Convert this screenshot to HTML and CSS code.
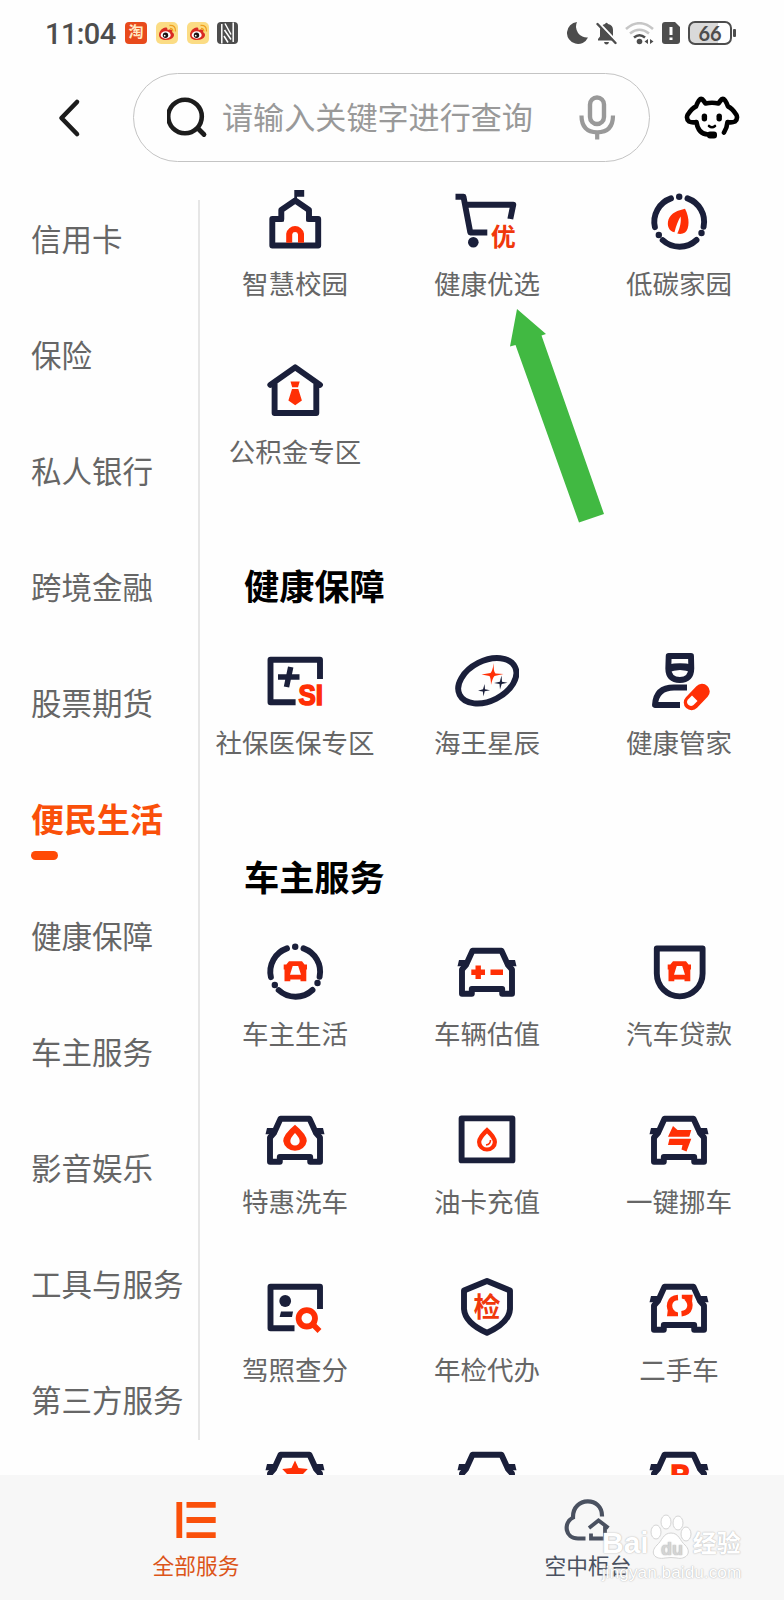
FILE: index.html
```html
<!DOCTYPE html>
<html lang="zh-CN">
<head>
    <meta charset="UTF-8">
    <meta name="viewport" content="width=device-width, initial-scale=1.0">
    <title>全部服务</title>
    <link rel="stylesheet" href="styles.css">
</head>
<body>

    <!-- Shared icon shapes -->
    <svg class="sprite" width="0" height="0">
        <symbol id="car" viewBox="0 0 64 64">
            <path class="line" d="M17.5 10.8H46.5L53 25L57 29.5V53.8H47.2V49H16.8V53.8H7V29.5L11 25Z"/>
            <path class="dark" d="M4 20H12L10 26.3H2.5ZM60 20H52L54 26.3H61.5Z"/>
        </symbol>
        <symbol id="ring" viewBox="0 0 64 64">
            <path class="line round" d="M40.5 8.4A24.8 24.8 0 0 1 56.6 36.8M49.5 50A24.8 24.8 0 0 1 15.7 50.2M7.9 37.2A24.8 24.8 0 0 1 24 8.4"/>
            <circle class="dark" cx="32.2" cy="6.8" r="3.2"/>
            <circle class="dark" cx="11.8" cy="45" r="3.2"/>
            <circle class="dark" cx="54.5" cy="43" r="3.2"/>
        </symbol>
        <symbol id="minicar" viewBox="0 0 64 64">
            <path class="red" fill-rule="evenodd" d="M26 21.3H39L41.5 24.5H44V29.5H43.3V41.3H37.5V39.5H27.3V41.3H21.5V29.5H20.7V24.5H23.3ZM29.7 26L27 34.8H38L35.2 26Z"/>
        </symbol>
        <symbol id="weibo" viewBox="0 0 22 22">
            <rect width="22" height="22" rx="5" fill="#fbdc84"/>
            <path d="M3 13C3 9 7 5 10 5.500C12 5.500 11 8 12 8C15 7 17 8 16 10C20 12 18 18 10 18C6 18 3 16 3 13Z" fill="#d92b22"/>
            <ellipse cx="9.700" cy="13" rx="5" ry="3.700" fill="#fff"/>
            <circle cx="9.500" cy="13.300" r="2.700" fill="#181010"/>
            <circle cx="8.700" cy="13.700" r="0.900" fill="#fff"/>
            <path d="M14 6.500Q17 6.500 16.800 9.500M13.500 3.500Q20 3 19.500 9.500" fill="none" stroke="#f0a020" stroke-width="1.300"/>
        </symbol>
    </svg>

    <!-- Status bar -->
    <div class="status">
        <div class="status-left">
            <span class="time">11:04</span>
            <span class="taobao">淘</span>
            <svg class="app" width="22" height="22"><use href="#weibo"/></svg>
            <svg class="app" width="22" height="22"><use href="#weibo"/></svg>
            <svg class="nfc" width="21" height="22" viewBox="0 0 21 22">
                <rect width="21" height="22" rx="4" fill="#4d4d4d"/>
                <path d="M4.800 2V21.500M16.200 0.500V20M8 1.500L14 12.500M7.500 8L14 17.500M7 14L11 20.500" stroke="#fff" stroke-width="1.500" fill="none"/>
            </svg>
        </div>
        <div class="status-right">
            <svg width="22" height="22" viewBox="0 0 22 22"><path d="M10 0A11 11 0 1 0 21 15.500A11 11 0 0 1 10 0Z" fill="#4d4d4d"/></svg>
            <svg class="bell" width="21" height="23" viewBox="0 0 21 23">
                <path d="M2 18.500V17L4 14.500V8Q4.500 3 9 2Q10.500 -0.500 12 2Q17 3 17 8V14.500L19 17V18.500ZM8 20H13Q12.500 22.500 10.500 22.500Q8.500 22.500 8 20Z" fill="#4d4d4d"/>
                <path d="M3 1L21 20" stroke="#fff" stroke-width="2.500"/>
                <path d="M1.500 2L19.500 21" stroke="#4d4d4d" stroke-width="2.400" stroke-linecap="round"/>
            </svg>
            <svg class="wifi" width="29" height="23" viewBox="0 0 29 23">
                <path d="M1 7Q14.500 -4.500 28 7M5 11.500Q14.500 4 24 11.500" fill="none" stroke="#c6c6c6" stroke-width="2.600"/>
                <path d="M9 15.500Q14.500 11 20 15.500" fill="none" stroke="#4d4d4d" stroke-width="2.600"/>
                <circle cx="14.500" cy="19.500" r="2.800" fill="#4d4d4d"/>
                <path d="M23 17V22L19.500 19.500ZM25 17V22L28.500 19.500Z" fill="#4d4d4d"/>
            </svg>
            <svg class="sim" width="18" height="22" viewBox="0 0 18 22">
                <path d="M3 0H13L18 5V19Q18 22 15 22H3Q0 22 0 19V3Q0 0 3 0Z" fill="#4d4d4d"/>
                <path d="M9 5V13M9 15.500V18" stroke="#fff" stroke-width="3"/>
            </svg>
            <span class="battery">66</span>
            <i class="battery-cap"></i>
        </div>
    </div>

    <!-- Search header -->
    <header class="header">
        <svg class="back" width="24" height="40" viewBox="0 0 24 40"><path d="M20 4L4.500 20L20 36" fill="none" stroke="#1c1c1c" stroke-width="4.600" stroke-linecap="round" stroke-linejoin="round"/></svg>
        <div class="search">
            <svg width="42" height="42" viewBox="0 0 42 42">
                <circle cx="18" cy="19.500" r="16.800" fill="none" stroke="#1c1c1c" stroke-width="4.600"/>
                <path d="M31 31.500L37 37.500" stroke="#1c1c1c" stroke-width="4.800" stroke-linecap="round"/>
            </svg>
            <span class="placeholder">请输入关键字进行查询</span>
            <svg class="mic" width="38" height="46" viewBox="0 0 38 46">
                <rect x="12" y="2.500" width="14" height="26.500" rx="7" fill="none" stroke="#999" stroke-width="4.400"/>
                <path d="M3.500 20.500Q3.500 37.300 19.200 37.300Q35 37.300 35 20.500M19.200 37.500V44.500" fill="none" stroke="#999" stroke-width="4.200"/>
            </svg>
        </div>
        <svg class="dog" width="56" height="44" viewBox="0 0 56 44">
            <path d="M12 11.500C14 6 16 3 18 4Q20 6 21.500 8.500Q28 7 34.500 8.500Q36 6 38 4C40 3 42 6 44 11.500Q48 13 52.500 20Q54 24 51 26.500Q48 28 43.500 27Q43 33 40 37.500M12 11.500Q8 13 3.500 20Q2 24 5 26.500Q8 28 12.500 27Q14 39 24 39.500" fill="none" stroke="#000" stroke-width="4.600" stroke-linecap="round" stroke-linejoin="round"/>
            <rect x="17.700" y="18.500" width="5.400" height="8" rx="2.700"/>
            <rect x="32.500" y="18.500" width="5.400" height="8" rx="2.700"/>
            <path d="M25 31Q28 33.500 31 31" fill="none" stroke="#000" stroke-width="2.600" stroke-linecap="round"/>
            <rect x="23" y="36.500" width="10" height="7" rx="3"/>
        </svg>
    </header>

    <main class="main">
        <!-- Categories -->
        <nav class="sidebar">
            <a class="cat">信用卡</a>
            <a class="cat">保险</a>
            <a class="cat">私人银行</a>
            <a class="cat">跨境金融</a>
            <a class="cat">股票期货</a>
            <a class="cat active">便民生活</a>
            <a class="cat">健康保障</a>
            <a class="cat">车主服务</a>
            <a class="cat">影音娱乐</a>
            <a class="cat">工具与服务</a>
            <a class="cat">第三方服务</a>
        </nav>
        <div class="divider"></div>

        <div class="content">
            <div class="grid">
                <div class="item">
                    <svg class="icon" viewBox="0 0 64 64">
                        <path class="line" d="M9.300 55.500V29H18.300V20L32.200 10.500L46 20V29H55.200V55.500Z"/>
                        <path class="dark" d="M15.500 26H21V31.500H15.500ZM43.300 26H48.800V31.500H43.300ZM31.300 0H41.200V6.700H34V10H31.300Z"/>
                        <path class="redline" d="M26.200 52.700V44A6 6 0 0 1 38 44V52.700"/>
                    </svg>
                    <span>智慧校园</span>
                </div>
                <div class="item">
                    <svg class="icon" viewBox="0 0 64 64">
                        <path class="line flat" d="M0.500 6.700H8.500L15.300 42.500H32.300M10 14.700H58.300L55.300 29"/>
                        <circle class="dark" cx="18.300" cy="52.300" r="5.300"/>
                        <text class="glyph" x="35.700" y="56" font-size="25">优</text>
                    </svg>
                    <span>健康优选</span>
                </div>
                <div class="item">
                    <svg class="icon" viewBox="0 0 64 64">
                        <use href="#ring"/>
                        <path class="red" d="M38 18.700C43 28 42.500 39 38 42.500Q35 44.500 30.300 43.600C33 38 34.500 31 33.500 26.500C31 31 29 36 27.500 42.300C22 41 19.500 36 21.500 29.500C24 22.500 31 20.500 38 18.700Z"/>
                    </svg>
                    <span>低碳家园</span>
                </div>
                <div class="item">
                    <svg class="icon" viewBox="0 0 64 64">
                        <path class="line round" d="M7.300 26.800L32.200 9.300L57 26.800M11.600 26V55H53.300V26"/>
                        <path class="red" d="M27.500 23.500H36.700L35 29.300H29.200ZM29 31H35.300L38.900 42.500L32.200 47.300L25.400 42.500Z"/>
                    </svg>
                    <span>公积金专区</span>
                </div>
            </div>

            <h2>健康保障</h2>
            <div class="grid">
                <div class="item">
                    <svg class="icon" viewBox="0 0 64 64">
                        <path class="line flat" d="M57 30V10.800H7.500V53.300H32.600"/>
                        <path d="M15 28H36.500M27.700 18L23.500 38" fill="none" stroke="#1a1f3a" stroke-width="5.500"/>
                        <text class="latin heavy" x="35.500" y="55.500" font-size="29" textLength="24.500" lengthAdjust="spacingAndGlyphs">SI</text>
                    </svg>
                    <span>社保医保专区</span>
                </div>
                <div class="item">
                    <svg class="icon" viewBox="0 0 64 64">
                        <ellipse class="line" cx="32.300" cy="31.800" rx="31" ry="20" transform="rotate(-27 32.300 31.800)"/>
                        <path class="red" d="M38.800 14Q38.300 23 40.500 24.500L48.500 25L39.500 27Q37.500 29 36 36Q35.800 28.500 34.500 27L26.500 25.500L35.500 24Q37.500 22 38.800 14Z"/>
                        <path class="dark" d="M46.500 26.500L47 32.700L52.500 33.700L46.700 35L45 40.500L44.500 35L39 34L44.800 32.700ZM29.600 35L30 40.300L35 41.300L29.700 42.300L28.500 47.500L27.800 42.500L23 41.700L28 40.300Z"/>
                    </svg>
                    <span>海王星辰</span>
                </div>
                <div class="item">
                    <svg class="icon" viewBox="0 0 64 64">
                        <path class="line" d="M21.700 7H44L44.300 19.500Q44 31 32.800 31Q21.500 31 21.300 19.500Z"/>
                        <path class="dark" d="M21 15.500Q33 12.800 45 15.500V23.500Q33 18.500 21 23.500Z"/>
                        <path class="line flat" d="M40 38.500H28Q9 38 8 56H33"/>
                        <path d="M44.500 53.500L55 42.500" stroke="#ff2f05" stroke-width="15.500" stroke-linecap="round"/>
                        <path d="M41 50.500L45 46.500L50.500 52L46.500 56Q43.500 58 41 55.500Q39 53 41 50.500Z" fill="#fff"/>
                    </svg>
                    <span>健康管家</span>
                </div>
            </div>

            <h2>车主服务</h2>
            <div class="grid">
                <div class="item">
                    <svg class="icon" viewBox="0 0 64 64"><use href="#ring"/><use href="#minicar"/></svg>
                    <span>车主生活</span>
                </div>
                <div class="item">
                    <svg class="icon" viewBox="0 0 64 64">
                        <use href="#car"/>
                        <path d="M16.300 32.300H30M23.200 25.500V39M35.500 32.300H48" stroke="#ff2f05" stroke-width="5.400"/>
                    </svg>
                    <span>车辆估值</span>
                </div>
                <div class="item">
                    <svg class="icon" viewBox="0 0 64 64">
                        <path class="line" d="M9.800 8.500H55.600V33.500A22.900 22.900 0 0 1 9.800 33.500Z"/>
                        <use href="#minicar"/>
                    </svg>
                    <span>汽车贷款</span>
                </div>
                <div class="item">
                    <svg class="icon" viewBox="0 0 64 64">
                        <use href="#car"/>
                        <path class="red" fill-rule="evenodd" d="M32 16.700Q43.800 26.500 43.800 33A11.900 11.300 0 0 1 20.200 33Q20.200 26.500 32 16.700ZM32 25Q27.300 30 27.300 33A4.700 4.500 0 0 0 36.700 33Q36.700 30 32 25Z"/>
                    </svg>
                    <span>特惠洗车</span>
                </div>
                <div class="item">
                    <svg class="icon" viewBox="0 0 64 64">
                        <rect class="line" x="6.600" y="10.400" width="50.800" height="42"/>
                        <path class="red" fill-rule="evenodd" d="M32 19.300Q42 28 42 34A10 9.500 0 0 1 22 34Q22 28 32 19.300ZM32 25.500Q26.300 31 26.300 34.300A5.700 5.300 0 0 0 37.700 34.300Q37.700 31 32 25.500Z"/>
                        <path d="M35.500 32Q35.500 36.500 31 37" fill="none" stroke="#ff2f05" stroke-width="1.600"/>
                    </svg>
                    <span>油卡充值</span>
                </div>
                <div class="item">
                    <svg class="icon" viewBox="0 0 64 64">
                        <use href="#car"/>
                        <path class="red" d="M26 18L30.500 22H44.300L42.300 28.700H21ZM22.500 30.700H44.300L39.500 43.500L34.500 41.500L35.500 37H21Z"/>
                    </svg>
                    <span>一键挪车</span>
                </div>
                <div class="item">
                    <svg class="icon" viewBox="0 0 64 64">
                        <path class="line flat" d="M57 33V10.800H7.500V52.300H31.500"/>
                        <circle class="dark" cx="22.200" cy="25" r="5.900"/>
                        <path class="dark" d="M18 35.500H30L29 41H16.600Z"/>
                        <circle cx="43.800" cy="42.300" r="8.200" fill="none" stroke="#ff2f05" stroke-width="5.800"/>
                        <path d="M49.500 48L56.500 55" stroke="#ff2f05" stroke-width="5.500"/>
                    </svg>
                    <span>驾照查分</span>
                </div>
                <div class="item">
                    <svg class="icon" viewBox="0 0 64 64">
                        <path class="line" d="M32 5L55 14.500V33Q54 47 32 56.800Q10 47 9 33V14.500Z"/>
                        <text class="glyph" x="18.500" y="41" font-size="27">检</text>
                    </svg>
                    <span>年检代办</span>
                </div>
                <div class="item">
                    <svg class="icon" viewBox="0 0 64 64">
                        <use href="#car"/>
                        <path d="M31 21.500C22 22 20 31 26 37M34.500 37.700C43.500 37 45.500 28 39.500 22" fill="none" stroke="#ff2f05" stroke-width="5.400"/>
                        <path class="red" d="M20 40.300L21 32.500L31 36.500V40.300ZM45.700 18.700L45 26L34.800 22.500V18.700Z"/>
                    </svg>
                    <span>二手车</span>
                </div>
                <div class="item">
                    <svg class="icon" viewBox="0 0 64 64">
                        <use href="#car"/>
                        <path class="red" d="M32 16.500L35.500 24L44.800 25L40 30H24L19.200 25L28.500 24Z"/>
                    </svg>
                </div>
                <div class="item">
                    <svg class="icon" viewBox="0 0 64 64"><use href="#car"/></svg>
                </div>
                <div class="item">
                    <svg class="icon" viewBox="0 0 64 64">
                        <use href="#car"/>
                        <text class="latin heavy" x="23.500" y="40" font-size="28">P</text>
                    </svg>
                </div>
            </div>
        </div>
    </main>

    <!-- Bottom tabs -->
    <footer class="tabs">
        <a class="tab current">
            <svg width="48" height="46" viewBox="0 0 48 46">
                <path d="M7.300 5V41M14.500 7.800H43.700M14.500 23H43.700M14.500 38.200H43.700" stroke="#fa500a" stroke-width="5.800"/>
            </svg>
            <span>全部服务</span>
        </a>
        <a class="tab">
            <svg width="48" height="46" viewBox="0 0 48 46">
                <path d="M38 19.500C38.500 -1 8.500 -0.500 9 20.500C-1 26 1 41.500 14 41.500H21.500" fill="none" stroke="#4a5160" stroke-width="4.200"/>
                <path d="M25 31L34.500 23.500L44.500 31M27 36.500V41.500H41V28.500" fill="none" stroke="#4a5160" stroke-width="3.800"/>
            </svg>
            <span>空中柜台</span>
        </a>
    </footer>

    <!-- Pointer arrow -->
    <svg class="arrow" width="96" height="218" viewBox="0 0 96 218">
        <path d="M9 2L38 27L33.500 28.500L96 207L71 215.500L7.500 38L2 39.500Z" fill="#41b942"/>
    </svg>

    <!-- Watermark -->
    <div class="watermark">
        <div class="wm-logo">
            <span class="wm-bai">Bai</span>
            <svg width="44" height="46" viewBox="0 0 44 46">
                <g fill="#fff" stroke="#d4d4d4" stroke-width="1">
                    <ellipse cx="7" cy="18" rx="5" ry="7"/>
                    <ellipse cx="17" cy="8" rx="5" ry="7"/>
                    <ellipse cx="29" cy="9" rx="5" ry="7"/>
                    <ellipse cx="37" cy="20" rx="5" ry="7"/>
                    <path d="M22 19C30 19 31 27 36 31C44 39 36 46 28 44Q22 43 16 44C6 46 0 39 8 31C13 27 14 19 22 19Z"/>
                </g>
                <text class="wm-du" x="12" y="41" font-size="18">du</text>
            </svg>
            <span class="wm-exp">经验</span>
        </div>
        <div class="wm-url">jingyan.baidu.com</div>
    </div>

</body>
</html>
```
FILE: styles.css
```css
* {
    box-sizing: border-box;
}
body {
    margin: 0;
    width: 784px;
    height: 1600px;
    overflow: hidden;
    position: relative;
    display: flex;
    flex-direction: column;
    background-color: #fefefe;
    font-family: "Noto Sans CJK SC", sans-serif;
    color: #666;
}
svg {
    display: block;
    flex-shrink: 0;
}
.sprite {
    display: none;
}

/* Status bar */
.status {
    height: 66px;
    flex-shrink: 0;
    display: flex;
    justify-content: space-between;
    padding: 0 48px 0 45px;
}
.status-left, .status-right {
    display: flex;
    align-items: center;
}
.time {
    width: 80px;
    padding-top: 2px;
    font-family: Roboto, sans-serif;
    font-size: 29px;
    font-weight: 500;
    letter-spacing: -0.6px;
    color: #4d4d4d;
}
.taobao {
    width: 22px;
    height: 22px;
    border-radius: 4px;
    background-color: #e84a1c;
    color: #ffe9c4;
    font-size: 15px;
    font-weight: bold;
    line-height: 18px;
    text-align: center;
}
.app {
    margin-left: 9px;
}
.nfc {
    margin-left: 8px;
}
.bell {
    margin-left: 7px;
}
.wifi {
    margin-left: 8px;
}
.sim {
    margin-left: 8px;
}
.battery {
    width: 44px;
    height: 24px;
    margin-left: 8px;
    border: 2px solid #4d4d4d;
    border-radius: 7px;
    background: linear-gradient(to right, #d9d9d9 70%, #fff 70%);
    font-family: Lato, sans-serif;
    font-size: 20px;
    font-weight: bold;
    line-height: 20px;
    text-align: center;
    color: #4d4d4d;
}
.battery-cap {
    width: 3px;
    height: 8px;
    margin-left: 1px;
    border-radius: 1px;
    background-color: #4d4d4d;
}

/* Header */
.header {
    height: 104px;
    flex-shrink: 0;
    display: flex;
    align-items: center;
    padding: 0 43px 1px 57px;
}
.back {
    margin-right: 52px;
}
.search {
    width: 517px;
    height: 89px;
    display: flex;
    align-items: center;
    padding: 0 33px;
    border: 1px solid #c4c4c4;
    border-radius: 45px;
}
.placeholder {
    margin-left: 13px;
    padding-bottom: 4px;
    font-size: 31.1px;
    line-height: 44px;
    color: #999;
    white-space: nowrap;
}
.mic {
    margin-left: auto;
}
.dog {
    margin-left: 34px;
    margin-bottom: 2px;
}

/* Body */
.main {
    height: 1305px;
    flex-shrink: 0;
    display: flex;
    overflow: hidden;
}
.sidebar {
    width: 198px;
    padding: 10px 0 0 31px;
}
.cat {
    display: block;
    height: 116.1px;
    font-size: 30.5px;
    line-height: 116px;
    white-space: nowrap;
}
.cat.active {
    font-size: 33px;
    font-weight: bold;
    color: #fa500a;
}
.cat.active::after {
    content: "";
    display: block;
    width: 27px;
    height: 9px;
    margin-top: -25px;
    border-radius: 5px;
    background-color: #ff4a05;
}
.divider {
    width: 2px;
    height: 1240px;
    margin-top: 30px;
    background-color: #e6e6e6;
}
.content {
    width: 576px;
    margin-left: -1px;
    padding-top: 20px;
}
.grid {
    display: grid;
    grid-template-columns: repeat(3, 192px);
    grid-auto-rows: 168px;
}
.item {
    display: flex;
    flex-direction: column;
    align-items: center;
    font-size: 26.5px;
    line-height: 36px;
    white-space: nowrap;
}
.icon {
    width: 64px;
    height: 64px;
    margin-bottom: 11px;
}
h2 {
    margin: 35px 0 40px 45px;
    font-size: 35.2px;
    line-height: 48px;
    color: #000;
}

/* Icon strokes */
.line {
    fill: none;
    stroke: #1a1f3a;
    stroke-width: 5.9;
    stroke-linejoin: round;
}
.round {
    stroke-linecap: round;
}
.dark {
    fill: #1a1f3a;
}
.red {
    fill: #ff2f05;
}
.redline {
    fill: none;
    stroke: #ff2f05;
    stroke-width: 6;
}
.glyph {
    fill: #f0380c;
    font-weight: bold;
}
.latin {
    fill: #ff2f05;
    stroke: #ff2f05;
    font-family: "Liberation Sans", sans-serif;
    font-weight: bold;
}
.heavy {
    stroke-width: 1.6;
}

/* Bottom tabs */
.tabs {
    height: 125px;
    flex-shrink: 0;
    display: flex;
    background-color: #f7f7f7;
}
.tab {
    width: 392px;
    display: flex;
    flex-direction: column;
    align-items: center;
    padding-top: 22px;
    font-size: 21.7px;
    line-height: 30px;
    color: #4a5160;
}
.tab span {
    margin-top: 7px;
}
.tab.current {
    color: #dc5418;
}

/* Overlays */
.arrow {
    position: absolute;
    left: 508px;
    top: 307px;
}
.watermark {
    position: absolute;
    left: 602px;
    top: 1514px;
    width: 142px;
    font-family: "Liberation Sans", "Noto Sans CJK SC", sans-serif;
    color: #fff;
    text-shadow: 0 0 1px #b8b8b8, 0 0 2px #c8c8c8;
}
.wm-logo {
    display: flex;
    height: 48px;
    align-items: flex-start;
}
.wm-bai {
    font-size: 30px;
    font-weight: bold;
    line-height: 58px;
}
.wm-exp {
    font-size: 24px;
    font-weight: bold;
    line-height: 60px;
    white-space: nowrap;
}
.wm-du {
    fill: #d4d4d4;
    font-weight: bold;
}
.wm-url {
    font-size: 17.3px;
    line-height: 20px;
}
```
